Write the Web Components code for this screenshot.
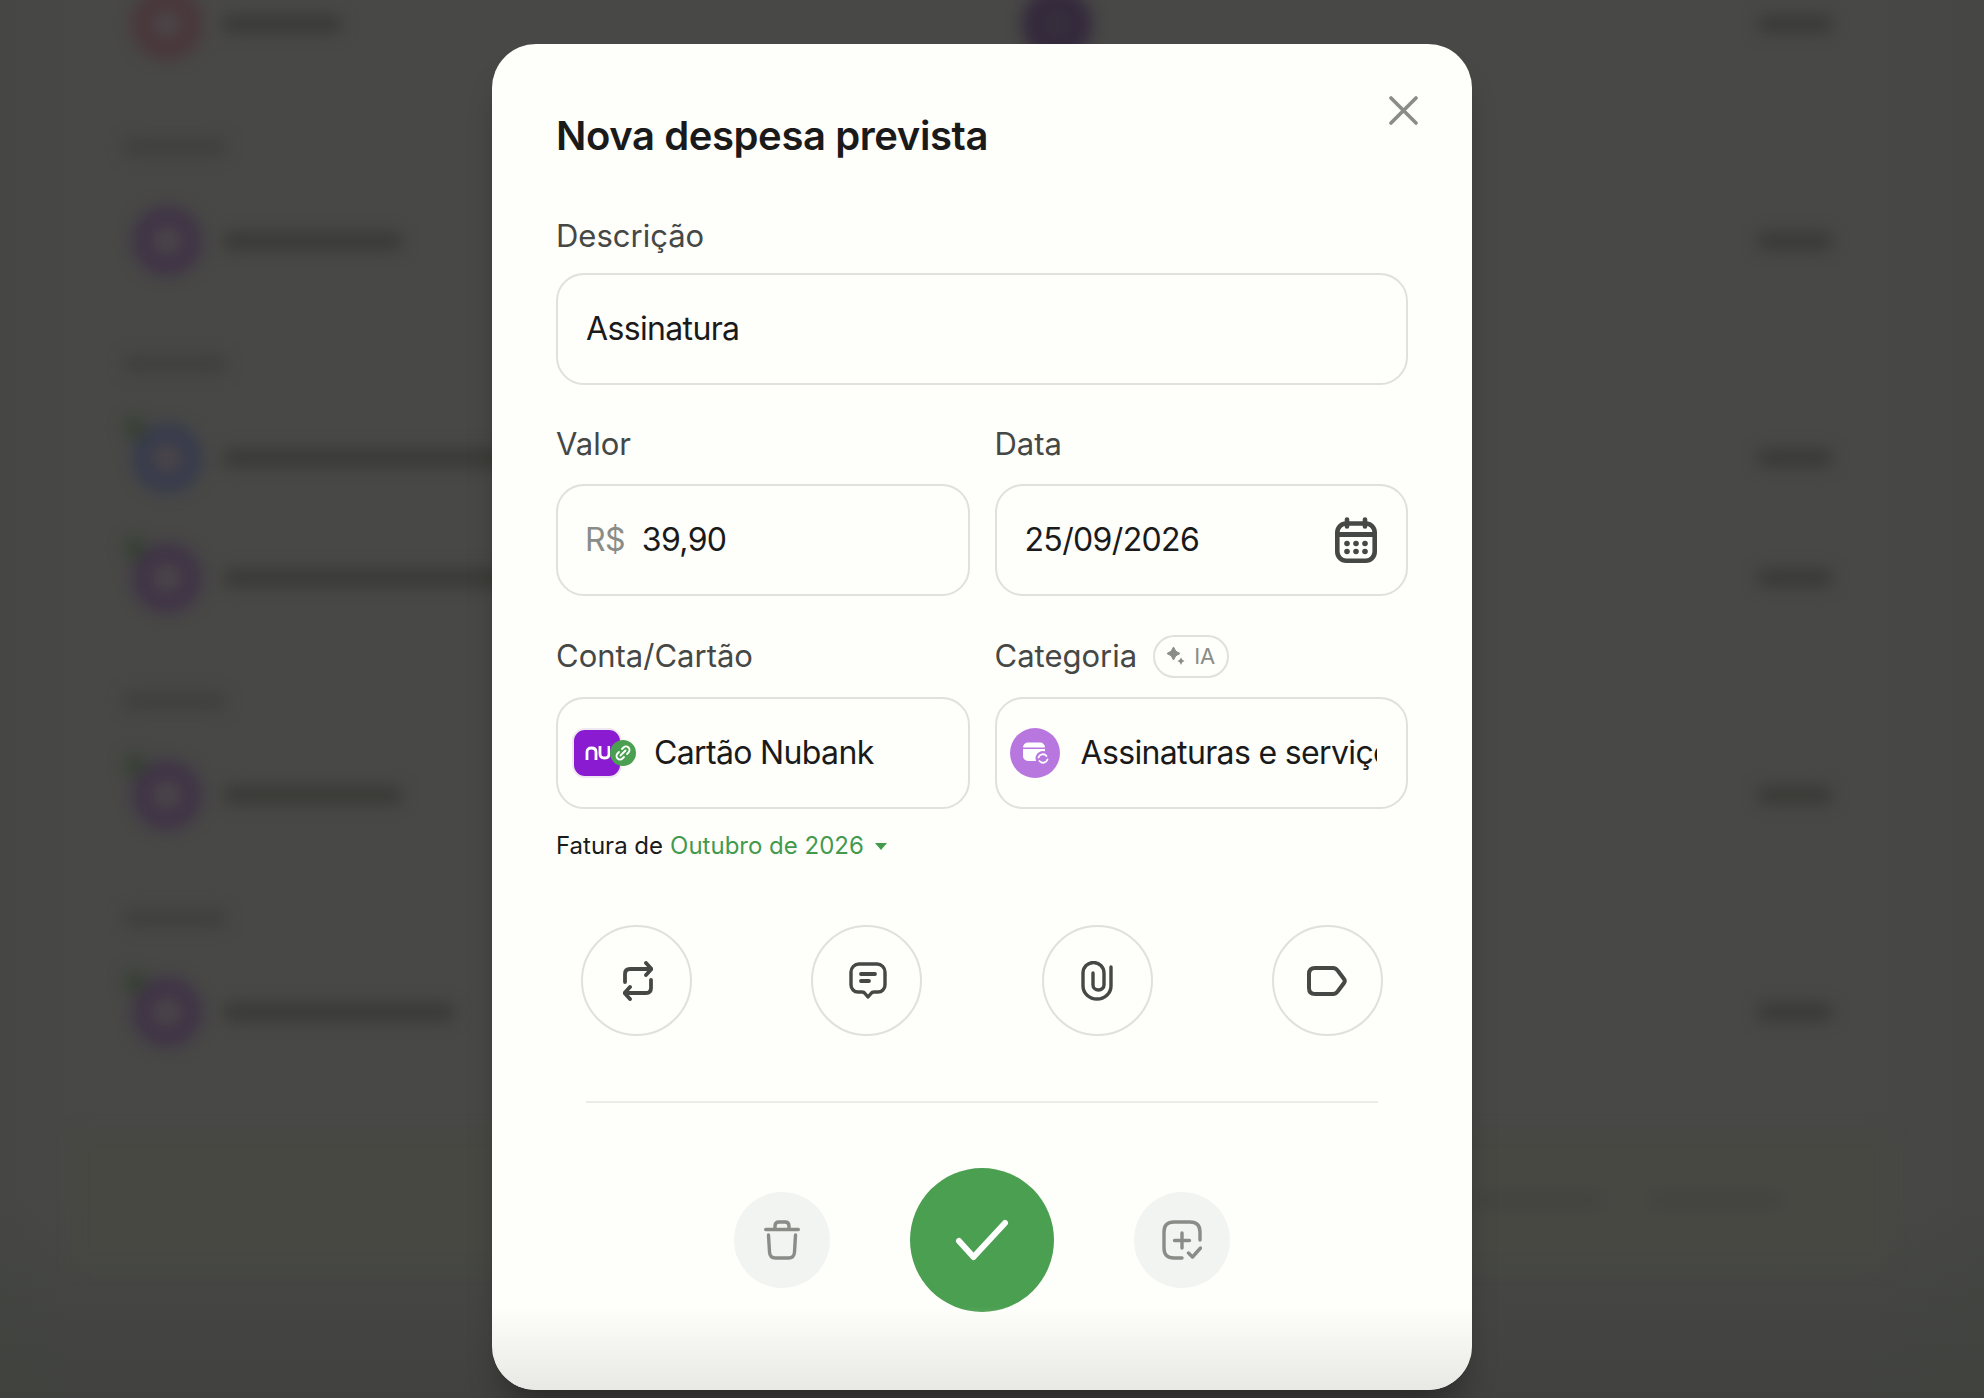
<!DOCTYPE html>
<html lang="pt-BR">
<head>
<meta charset="utf-8">
<title>Nova despesa prevista</title>
<style>
  html, body { margin: 0; padding: 0; height: 100%; overflow: hidden; background: #484846; }
  body { font-family: Inter, "Noto Sans", sans-serif; }
</style>
</head>
<body>
<expense-page>
  <blurred-list slot="back"></blurred-list>
  <expense-modal slot="front" heading="Nova despesa prevista"></expense-modal>
</expense-page>

<script>
const ICONS = {
  close: `<svg width="29" height="29" viewBox="0 0 29 29" fill="none" stroke="#8a8c88" stroke-width="3.6" stroke-linecap="round"><path d="M2 2 27 27M27 2 2 27"/></svg>`,
  calendar: `<svg width="42" height="46" viewBox="0 0 42 46" fill="none" stroke="#454845" stroke-width="4.600" stroke-linecap="round"><rect x="2.300" y="6.500" width="37.400" height="37.200" rx="9"/><path d="M12 2.500v7M30 2.500v7"/><path d="M2 17.500h38" stroke-width="5"/><g fill="#454845" stroke="none"><circle cx="12" cy="26.500" r="2.800"/><circle cx="21" cy="26.500" r="2.800"/><circle cx="30" cy="26.500" r="2.800"/><circle cx="12" cy="34.500" r="2.800"/><circle cx="21" cy="34.500" r="2.800"/><circle cx="30" cy="34.500" r="2.800"/></g></svg>`,
  sparkle: `<svg width="18" height="18" viewBox="0 0 18 18" fill="#8a8c88"><path d="M6.500 0 8.800 4.200 13 6.500 8.800 8.800 6.500 13 4.200 8.800 0 6.500 4.200 4.200z" stroke="#8a8c88" stroke-width="1" stroke-linejoin="round"/><path d="M14 10.500l1.300 2.200 2.200 1.300-2.200 1.300L14 18l-1.300-2.700-2.200-1.300 2.200-1.300z"/></svg>`,
  repeat: `<svg width="30" height="40" viewBox="0 0 30 40" fill="none" stroke="#454845" stroke-width="3.800" stroke-linecap="round" stroke-linejoin="round"><path d="M2 21v-8q0-5 5-5h21M23 2l5.500 6L23 14"/><path d="M28 19v8q0 5-5 5H2M7 26l-5.500 6L7 38"/></svg>`,
  comment: `<svg width="38" height="37" viewBox="0 0 38 37" fill="none" stroke="#454845" stroke-width="3.400" stroke-linecap="round" stroke-linejoin="round"><path d="M10 2h18a8 8 0 0 1 8 8v13a7 7 0 0 1-7 7h-4q-2 0-3 1.500L19 35l-3-3.500Q15 30 13 30H9a7 7 0 0 1-7-7V10a8 8 0 0 1 8-8z"/><path d="M12 12h14M12 19h8" stroke-width="3.800"/></svg>`,
  clip: `<svg width="32" height="40" viewBox="0 0 32 40" fill="none" stroke="#454845" stroke-width="3.400" stroke-linecap="round"><path d="M30 6v19a14 13 0 0 1-28 0V12a10.500 10.500 0 0 1 21 0v12a5.500 5 0 0 1-11 0V12"/></svg>`,
  tag: `<svg width="40" height="30" viewBox="0 0 40 30" fill="none" stroke="#454845" stroke-width="4" stroke-linejoin="round"><path d="M8 2h18q3 0 5 3l6 8q1.500 2 0 4l-6 8q-2 3-5 3H8q-6 0-6-6V8q0-6 6-6z"/></svg>`,
  trash: `<svg width="36" height="40" viewBox="0 0 36 40" fill="none" stroke="#8a8c88" stroke-width="3.400" stroke-linecap="round" stroke-linejoin="round"><path d="M1.700 9.500h32.600"/><path d="M11 9V6q0-4 4-4h6q4 0 4 4v3"/><path d="M4.500 15l1 17q.3 6 6 6h13q5.700 0 6-6l1-17"/></svg>`,
  check: `<svg width="54" height="42" viewBox="0 0 54 42" fill="none" stroke="#fff" stroke-width="6" stroke-linecap="round" stroke-linejoin="round"><path d="M4 22l14.500 16L50 4"/></svg>`,
  addcheck: `<svg width="40" height="40" viewBox="0 0 40 40" fill="none" stroke="#8a8c88" stroke-width="3.400" stroke-linecap="round" stroke-linejoin="round"><path d="M20 38h-8q-10 0-10-10V12q0-10 10-10h16q10 0 10 10v8"/><path d="M20 13v15M12.500 20.500h15"/><path d="M26.500 33l4 4 8-9"/></svg>`
};

class AppIcon extends HTMLElement {
  connectedCallback() {
    const root = this.attachShadow({ mode: 'open' });
    root.innerHTML = `<style>:host{display:inline-flex;line-height:0}</style>${ICONS[this.getAttribute('name')]}`;
  }
}

class ExpensePage extends HTMLElement {
  constructor() {
    super();
    this.attachShadow({ mode: 'open' }).innerHTML = `
      <style>
        :host {
          display: block;
          position: relative;
          width: 1984px;
          height: 1398px;
          overflow: hidden;
          background:
            linear-gradient(90deg, rgba(60,66,58,.2), rgba(0,0,0,0) 80px, rgba(0,0,0,0) 1860px, rgba(60,66,58,.2)),
            linear-gradient(180deg, #484846 0, #484846 86%, #41423f 100%);
        }
        .front {
          position: absolute;
          inset: 0;
          display: flex;
          justify-content: center;
          align-items: flex-start;
          box-sizing: border-box;
          padding: 44px 20px 0 0;
        }
      </style>
      <slot name="back"></slot>
      <div class="front"><slot name="front"></slot></div>`;
  }
}

class BlurredList extends HTMLElement {
  constructor() {
    super();
    const row = (ring, w, peek, badge) => `
      <div class="row">
        <span class="avatar" style="--ring:${ring}">${badge ? '<i></i>' : ''}</span>
        <span class="text"><b style="width:${w}px"></b></span>
        ${peek ? '<span class="avatar peek" style="--ring:#33283c"></span>' : ''}
        <b class="amount"></b>
      </div>`;
    const label = `<div class="label"><b></b></div>`;
    this.attachShadow({ mode: 'open' }).innerHTML = `
      <style>
        :host { display: block; filter: blur(8px); }
        .list { margin-top: -36px; display: flex; flex-direction: column; }
        b { display: block; height: 18px; background: #393937; border-radius: 9px; }
        .row { height: 120px; display: flex; align-items: center; padding: 0 151px 0 132px; }
        .label { height: 97px; box-sizing: border-box; padding-top: 28px; display: flex; align-items: center; padding-left: 123px; }
        .label b { width: 104px; background: #3f3f3d; }
        .avatar { position: relative; box-sizing: border-box; flex: none; width: 70px; height: 70px; border-radius: 50%; border: 20px solid var(--ring); background: #4a4548; }
        .avatar i { position: absolute; left: -28px; top: -26px; width: 22px; height: 22px; border-radius: 50%; background: #354032; }
        .text { width: 820px; flex: none; padding-left: 20px; box-sizing: border-box; }
        .peek { background: #362f3c; }
        .amount { margin-left: auto; width: 76px; }
        .card { margin: 60px 96px 0 75px; height: 135px; background: #474842; display: flex; align-items: center; justify-content: flex-end; gap: 50px; padding-right: 108px; }
        .card b { height: 12px; background: #41413f; }
      </style>
      <div class="list">
        ${row('#4a363a', 120, true)}
        ${label}
        ${row('#3f3346', 181)}
        ${label}
        ${row('#373b4c', 500, false, true)}
        ${row('#3f3346', 500, false, true)}
        ${label}
        ${row('#3f3346', 181, false, true)}
        ${label}
        ${row('#3f3346', 233, false, true)}
        <div class="card"><b style="width:125px"></b><b style="width:130px"></b></div>
      </div>`;
  }
}

class FormField extends HTMLElement {
  constructor() {
    super();
    this.attachShadow({ mode: 'open' }).innerHTML = `
      <style>
        :host { display: flex; flex-direction: column; min-width: 0; }
        .head { display: flex; align-items: center; gap: 16px; height: 44px; margin-bottom: var(--label-gap, 19px); font: 400 31px/36px Inter, sans-serif; color: #454845; }
      </style>
      <div class="head"><span class="label"></span><slot name="extra"></slot></div>
      <slot></slot>`;
  }
  connectedCallback() {
    this.shadowRoot.querySelector('.label').textContent = this.getAttribute('label');
  }
}

class FieldBox extends HTMLElement {
  constructor() {
    super();
    this.attachShadow({ mode: 'open' }).innerHTML = `
      <style>
        :host {
          display: flex;
          align-items: center;
          box-sizing: border-box;
          height: 112px;
          padding: 0 29px 0 28px;
          border: 2px solid #dfe1dd;
          border-radius: 28px;
          font: 400 32px/40px Inter, sans-serif;
          letter-spacing: -.65px;
          color: #1a1a1a;
          min-width: 0;
        }
        :host([tight]) { padding-left: 14px; }
      </style>
      <slot></slot>`;
  }
}

class AiPill extends HTMLElement {
  constructor() {
    super();
    this.attachShadow({ mode: 'open' }).innerHTML = `
      <style>
        :host { display: inline-flex; align-items: center; gap: 9px; box-sizing: border-box; height: 43px; padding: 0 12px 0 12px; border: 2px solid #dfe1dd; border-radius: 22px; font: 400 22px/26px Inter, sans-serif; color: #8a8c88; }
      </style>
      <app-icon name="sparkle"></app-icon><span><slot></slot></span>`;
  }
}

class RoundButton extends HTMLElement {
  constructor() {
    super();
    this.attachShadow({ mode: 'open' }).innerHTML = `
      <style>
        :host { display: flex; align-items: center; justify-content: center; flex: none; box-sizing: border-box; border-radius: 50%; width: 111px; height: 111px; border: 2px solid #dfe1dd; }
        :host([variant="soft"]) { width: 96px; height: 96px; border: 0; background: #f2f4f1; }
        :host([variant="primary"]) { width: 144px; height: 144px; border: 0; background: #4a9f50; }
        ::slotted(.nudge) { margin-left: 3px; }
      </style>
      <slot></slot>`;
  }
}

class NubankMark extends HTMLElement {
  constructor() {
    super();
    this.attachShadow({ mode: 'open' }).innerHTML = `
      <style>
        :host { display: block; position: relative; flex: none; width: 50px; height: 50px; margin-right: 32px; }
        .tile { box-sizing: border-box; width: 50px; height: 50px; border-radius: 13px; background: #8a1bd1; border: 2px solid #eee9f1; display: flex; align-items: center; padding-left: 11px; }
        .link { position: absolute; left: 38px; top: 12px; width: 26px; height: 26px; border-radius: 50%; background: #4a9f50; display: flex; }
      </style>
      <div class="tile">
        <svg width="25" height="14" viewBox="0 0 25 14" fill="none" stroke="#fff" stroke-width="2.800"><path d="M2 14V6q0-4 4.500-4T11 6v8"/><path d="M15 0v8q0 4 4.500 4T24 8V0"/></svg>
      </div>
      <div class="link">
        <svg width="26" height="26" viewBox="0 0 26 26" fill="none" stroke="#fff" stroke-width="1.800" stroke-linecap="round"><path d="M10.500 15.500l5-5M12 9l1.500-1.500a3.500 3.500 0 0 1 5 5L17 14M14 17l-1.500 1.500a3.500 3.500 0 0 1-5-5L9 12"/></svg>
      </div>`;
  }
}

class CategoryMark extends HTMLElement {
  constructor() {
    super();
    this.attachShadow({ mode: 'open' }).innerHTML = `
      <style>
        :host { display: flex; flex: none; width: 50px; height: 50px; margin-right: 21px; margin-left: -15px; border-radius: 50%; background: #b877df; }
      </style>
      <svg width="50" height="50" viewBox="0 0 50 50">
        <path fill="#fff" d="M13 19.500a5 5 0 0 1 5-5h12a5 5 0 0 1 5 5zM13 21h22v7a5 5 0 0 1-5 5H18a5 5 0 0 1-5-5z"/>
        <circle cx="33" cy="30.500" r="7.500" fill="#b877df"/>
        <path fill="none" stroke="#fff" stroke-width="1.800" stroke-linecap="round" d="M28.500 29.500a4.600 4.600 0 0 1 8-1.500M37.500 31.500a4.600 4.600 0 0 1-8 1.500"/>
      </svg>`;
  }
}

class ExpenseModal extends HTMLElement {
  constructor() {
    super();
    this.attachShadow({ mode: 'open' }).innerHTML = `
      <style>
        :host {
          display: block;
          position: relative;
          box-sizing: border-box;
          width: 980px;
          height: 1346px;
          padding: 68px 64px 0;
          background: #fefefb;
          border-radius: 44px;
          box-shadow: 0 26px 34px -12px rgba(0,0,0,.38);
          overflow: hidden;
          font-family: Inter, sans-serif;
        }
        :host::after {
          content: "";
          position: absolute;
          left: 0; right: 0; bottom: 0;
          height: 84px;
          background: linear-gradient(180deg, rgba(232,232,229,0), #e8e8e5);
          pointer-events: none;
        }
        h1 { margin: 0 0 54px; font: 600 40px/48px Inter, sans-serif; letter-spacing: -.4px; color: #1a1a1a; }
        .close { position: absolute; right: 54px; top: 52px; }
        .row { display: grid; grid-template-columns: 1fr 1fr; gap: 25px; margin-top: 37px; }
        .row.next { margin-top: 38px; }
        .first { --label-gap: 15px; }
        .row:not(.next) { --label-gap: 18px; }
        .money { color: #8a8c88; margin-right: 17px; margin-left: -1px; }
        .grow { flex: 1; min-width: 0; white-space: nowrap; overflow: hidden; }
        .invoice { margin-top: 20px; font: 400 24px/34px Inter, sans-serif; color: #1a1a1a; display: flex; align-items: center; height: 34px; }
        .invoice em { font-style: normal; color: #439a4d; margin-left: 7px; }
        .caret { width: 0; height: 0; margin-left: 11px; border: 6px solid transparent; border-top: 7px solid #439a4d; border-bottom: 0; }
        .tools { display: flex; justify-content: space-between; padding: 0 25px; margin-top: 62px; }
        hr { border: 0; height: 2px; background: #ecede9; margin: 65px 30px 0; }
        .actions { display: flex; justify-content: center; align-items: center; gap: 80px; margin-top: 65px; }
      </style>
      <h1></h1>
      <div class="close"><app-icon name="close"></app-icon></div>

      <form-field class="first" label="Descrição">
        <field-box>Assinatura</field-box>
      </form-field>

      <div class="row">
        <form-field label="Valor">
          <field-box><span class="money">R$</span>39,90</field-box>
        </form-field>
        <form-field label="Data">
          <field-box><span class="grow">25/09/2026</span><app-icon name="calendar"></app-icon></field-box>
        </form-field>
      </div>

      <div class="row next">
        <form-field label="Conta/Cartão">
          <field-box tight><nubank-mark></nubank-mark>Cartão Nubank</field-box>
        </form-field>
        <form-field label="Categoria">
          <ai-pill slot="extra">IA</ai-pill>
          <field-box><category-mark></category-mark><span class="grow">Assinaturas e serviços</span></field-box>
        </form-field>
      </div>

      <div class="invoice">Fatura de <em>Outubro de 2026</em><span class="caret"></span></div>

      <div class="tools">
        <round-button><app-icon class="nudge" name="repeat"></app-icon></round-button>
        <round-button><app-icon class="nudge" name="comment"></app-icon></round-button>
        <round-button><app-icon name="clip"></app-icon></round-button>
        <round-button><app-icon name="tag"></app-icon></round-button>
      </div>

      <hr>

      <div class="actions">
        <round-button variant="soft"><app-icon name="trash"></app-icon></round-button>
        <round-button variant="primary"><app-icon name="check"></app-icon></round-button>
        <round-button variant="soft"><app-icon name="addcheck"></app-icon></round-button>
      </div>`;
  }
  connectedCallback() {
    this.shadowRoot.querySelector('h1').textContent = this.getAttribute('heading');
  }
}

customElements.define('app-icon', AppIcon);
customElements.define('blurred-list', BlurredList);
customElements.define('form-field', FormField);
customElements.define('field-box', FieldBox);
customElements.define('ai-pill', AiPill);
customElements.define('round-button', RoundButton);
customElements.define('nubank-mark', NubankMark);
customElements.define('category-mark', CategoryMark);
customElements.define('expense-modal', ExpenseModal);
customElements.define('expense-page', ExpensePage);
</script>
</body>
</html>
